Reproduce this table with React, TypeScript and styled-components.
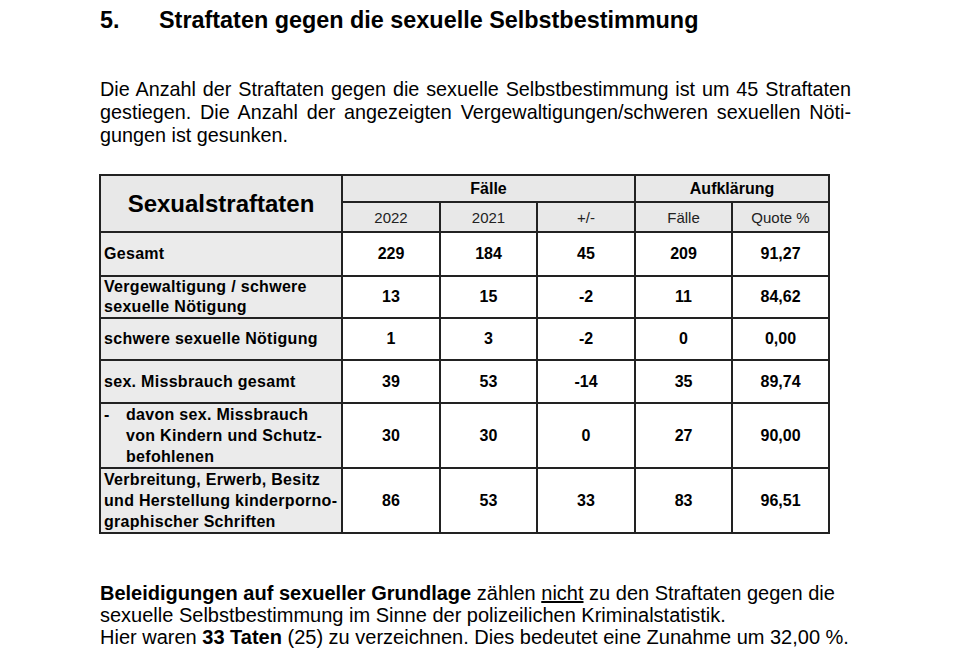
import React from "react";
import styled, { createGlobalStyle } from "styled-components";

const Global = createGlobalStyle`
  html, body { margin: 0; padding: 0; background: #fff; }
  body { font-family: "Liberation Sans", Arial, sans-serif; color: #000; }
`;

const Page = styled.div`
  width: 953px;
  height: 671px;
  padding: 5px 0 0 100px;
  box-sizing: border-box;
  overflow: hidden;
`;

const Title = styled.h1`
  display: flex;
  margin: 0;
  font-size: 23.4px;
  font-weight: bold;
  line-height: 30px;
`;

const TitleNum = styled.span`
  width: 59px;
`;

const Intro = styled.div`
  margin-top: 43px;
  width: 751px;
  font-size: 19.8px;
  line-height: 23px;
`;

const JustLine = styled.div`
  white-space: nowrap;
  text-align: justify;
  text-align-last: justify;
`;

const Line = styled.div`
  white-space: nowrap;
`;

const Table = styled.table`
  margin-top: 27px;
  margin-left: -1px;
  border-collapse: collapse;
  table-layout: fixed;
  width: 729px;
  & td, & th {
    border: 2px solid #222;
    padding: 0;
  }
`;

const HeadCell = styled.th<{ $big?: boolean; $sub?: boolean }>`
  background: #e8e8e8;
  text-align: center;
  font-weight: ${(p) => (p.$sub ? "normal" : "bold")};
  font-size: ${(p) => (p.$big ? "24px" : p.$sub ? "15px" : "16px")};
  color: ${(p) => (p.$sub ? "#222" : "#000")};
  height: ${(p) => (p.$sub ? "28px" : "25px")};
`;

const LabelCell = styled.td`
  background: #ebebeb;
  font-size: 16px;
  font-weight: bold;
  letter-spacing: 0.3px;
  line-height: 20px;
  padding: 0 3px !important;
  vertical-align: middle;
  white-space: nowrap;
`;

const Stack = styled.div<{ $lh?: number }>`
  line-height: ${(p) => p.$lh ?? 20}px;
`;

const Hang = styled.div`
  display: flex;
  line-height: 21px;
`;

const Dash = styled.span`
  width: 22px;
  flex: none;
`;

const NumCell = styled.td`
  background: #fff;
  text-align: center;
  font-size: 16px;
  font-weight: bold;
  vertical-align: middle;
`;

const Row = styled.tr<{ $h: number }>`
  height: ${(p) => p.$h}px;
`;

const Outro = styled.div`
  margin-top: 48px;
  font-size: 20px;
  line-height: 22px;
`;

const U = styled.span`
  text-decoration: underline;
`;

const rows: { label: React.ReactNode; vals: string[]; h: number }[] = [
  { label: "Gesamt", vals: ["229", "184", "45", "209", "91,27"], h: 44 },
  {
    label: (
      <Stack>
        Vergewaltigung / schwere
        <br />
        sexuelle Nötigung
      </Stack>
    ),
    vals: ["13", "15", "-2", "11", "84,62"],
    h: 40,
  },
  { label: "schwere sexuelle Nötigung", vals: ["1", "3", "-2", "0", "0,00"], h: 42 },
  { label: "sex. Missbrauch gesamt", vals: ["39", "53", "-14", "35", "89,74"], h: 43 },
  {
    label: (
      <Hang>
        <Dash>-</Dash>
        <span>
          davon sex. Missbrauch
          <br />
          von Kindern und Schutz-
          <br />
          befohlenen
        </span>
      </Hang>
    ),
    vals: ["30", "30", "0", "27", "90,00"],
    h: 63,
  },
  {
    label: (
      <Stack $lh={21}>
        Verbreitung, Erwerb, Besitz
        <br />
        und Herstellung kinderporno-
        <br />
        graphischer Schriften
      </Stack>
    ),
    vals: ["86", "53", "33", "83", "96,51"],
    h: 65,
  },
];

export default function App() {
  return (
    <Page>
      <Global />
      <Title>
        <TitleNum>5.</TitleNum>
        <span>Straftaten gegen die sexuelle Selbstbestimmung</span>
      </Title>
      <Intro>
        <JustLine>Die Anzahl der Straftaten gegen die sexuelle Selbstbestimmung ist um 45 Straftaten</JustLine>
        <JustLine>gestiegen. Die Anzahl der angezeigten Vergewaltigungen/schweren sexuellen Nöti-</JustLine>
        <Line>gungen ist gesunken.</Line>
      </Intro>
      <Table>
        <colgroup>
          <col style={{ width: 242 }} />
          <col style={{ width: 98 }} />
          <col style={{ width: 97 }} />
          <col style={{ width: 98 }} />
          <col style={{ width: 97 }} />
          <col style={{ width: 97 }} />
        </colgroup>
        <thead>
          <tr>
            <HeadCell $big rowSpan={2}>
              Sexualstraftaten
            </HeadCell>
            <HeadCell colSpan={3}>Fälle</HeadCell>
            <HeadCell colSpan={2}>Aufklärung</HeadCell>
          </tr>
          <tr>
            <HeadCell $sub>2022</HeadCell>
            <HeadCell $sub>2021</HeadCell>
            <HeadCell $sub>+/-</HeadCell>
            <HeadCell $sub>Fälle</HeadCell>
            <HeadCell $sub>Quote %</HeadCell>
          </tr>
        </thead>
        <tbody>
          {rows.map((r, i) => (
            <Row key={i} $h={r.h}>
              <LabelCell>{r.label}</LabelCell>
              {r.vals.map((v, j) => (
                <NumCell key={j}>{v}</NumCell>
              ))}
            </Row>
          ))}
        </tbody>
      </Table>
      <Outro>
        <Line>
          <b>Beleidigungen auf sexueller Grundlage</b> zählen <U>nicht</U> zu den Straftaten gegen die
        </Line>
        <Line>sexuelle Selbstbestimmung im Sinne der polizeilichen Kriminalstatistik.</Line>
        <Line>
          Hier waren <b>33 Taten</b> (25) zu verzeichnen. Dies bedeutet eine Zunahme um 32,00 %.
        </Line>
      </Outro>
    </Page>
  );
}
